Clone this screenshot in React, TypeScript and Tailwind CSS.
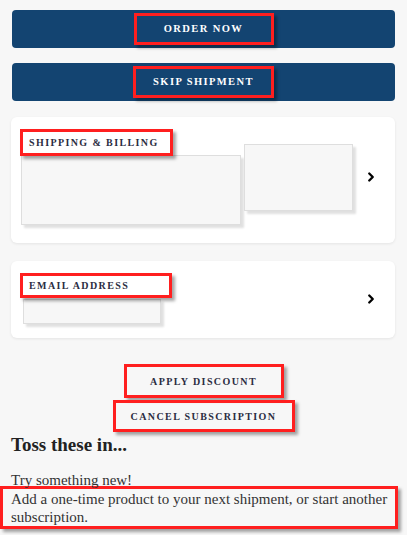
import { ChevronRight } from 'lucide-react'

const serif = { fontFamily: '"Liberation Serif", "DejaVu Serif", serif' }

function Outline({ children, className = '' }: { children: React.ReactNode; className?: string }) {
  return (
    <div
      className={`border-[3px] border-[#ff1f1f] shadow-[3px_3px_3px_rgba(0,0,0,0.35)] flex items-center ${className}`}
    >
      {children}
    </div>
  )
}

function Placeholder({ className = '' }: { className?: string }) {
  return (
    <div className={`bg-[#f7f7f7] border border-[#dedede] shadow-[3px_3px_2px_rgba(0,0,0,0.12)] ${className}`} />
  )
}

function BlueButton({ label, width }: { label: string; width: string }) {
  return (
    <div className="h-[38px] rounded-[4px] bg-[#134471] flex items-center justify-center">
      <Outline className={`${width} h-[32px] justify-center`}>
        <span className="text-white font-bold text-[10.5px] tracking-[1.4px]">{label}</span>
      </Outline>
    </div>
  )
}

export default function App() {
  return (
    <div className="min-h-screen bg-[#f7f7f7] px-3 pt-[10px] text-[#2b2d42]" style={serif}>
      <BlueButton label="ORDER NOW" width="w-[140px]" />
      <div className="mt-[15px]">
        <BlueButton label="SKIP SHIPMENT" width="w-[141px]" />
      </div>

      {/* shipping & billing */}
      <div className="mt-[16px] -ml-px bg-white rounded-[6px] shadow-[0_1px_3px_rgba(0,0,0,0.08)] pl-[9px] pr-[17px] pt-[12px] pb-[18px] flex items-center">
        <div className="flex flex-col">
          <Outline className="w-[153px] h-[27px] pl-[6px] relative z-10">
            <span className="font-bold text-[10px] tracking-[1.4px]">SHIPPING &amp; BILLING</span>
          </Outline>
          <Placeholder className="ml-px -mt-px w-[220px] h-[70px]" />
        </div>
        <Placeholder className="ml-[3px] w-[109px] h-[67px]" />
        <ChevronRight className="ml-auto w-[14px] h-[14px] text-black" strokeWidth={4} />
      </div>

      {/* email */}
      <div className="mt-[18px] -ml-px bg-white rounded-[6px] shadow-[0_1px_3px_rgba(0,0,0,0.08)] pl-[9px] pr-[17px] pt-[12px] pb-[14px] flex items-center">
        <div className="flex flex-col">
          <Outline className="w-[152px] h-[25px] pl-[6px] relative z-10">
            <span className="font-bold text-[10px] tracking-[1.4px]">EMAIL ADDRESS</span>
          </Outline>
          <Placeholder className="ml-[3px] mt-px w-[138px] h-[25px]" />
        </div>
        <ChevronRight className="ml-auto w-[14px] h-[14px] text-black" strokeWidth={4} />
      </div>

      <div className="mt-[26px] flex flex-col items-center">
        <Outline className="w-[160px] h-[34px] justify-center">
          <span className="font-bold text-[10px] tracking-[1.4px]">APPLY DISCOUNT</span>
        </Outline>
        <Outline className="mt-[2px] w-[182px] h-[32px] justify-center">
          <span className="font-bold text-[10px] tracking-[1.4px]">CANCEL SUBSCRIPTION</span>
        </Outline>
      </div>

      <h2 className="-ml-px text-[19px] font-bold leading-[26px] text-[#222]">Toss these in...</h2>
      <p className="mt-[13px] -ml-px text-[15px] leading-[18px] text-[#333]">Try something new!</p>
      <div className="-mt-[3px] -ml-3 w-[398px] border-[3px] border-[#ff1f1f] shadow-[3px_3px_3px_rgba(0,0,0,0.35)] pl-[8px] pt-px text-[15px] leading-[18px] text-[#333]">
        Add a one-time product to your next shipment, or start another subscription.
      </div>
    </div>
  )
}
